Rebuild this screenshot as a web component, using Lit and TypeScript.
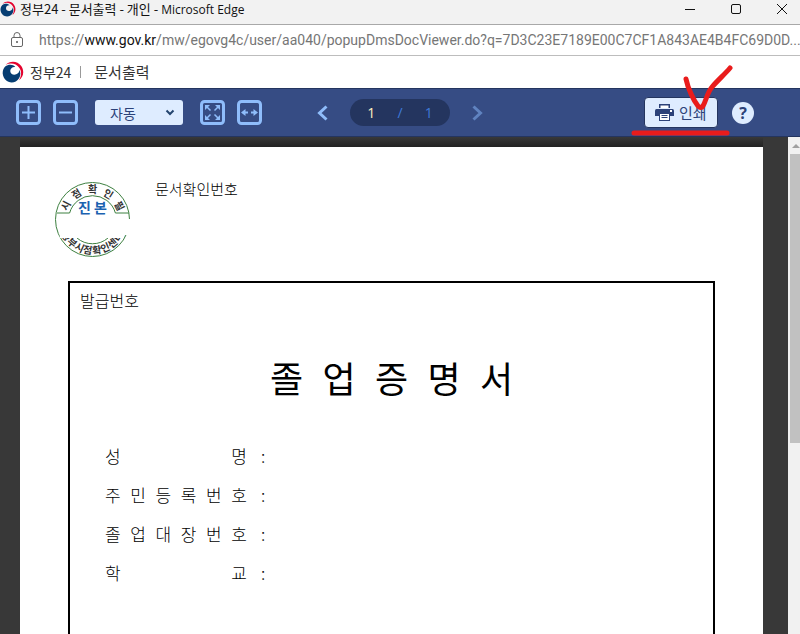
import { LitElement, html, css, svg } from "lit";
import { customElement } from "lit/decorators.js";

const emblem = (size: number) => html`
  <svg class="emblem" width=${size} height=${size} viewBox="0 0 24 24" aria-hidden="true">
    <path d="M4 4C9-.8 17 -.2 21 5.500C25 11.500 23 18 18.500 21C21.500 16 21.500 11 19 7.500C15.500 2.500 9.500 1.500 4 4Z" fill="#e4032e" />
    <path d="M3.500 6C7 3 12.500 3.500 14.500 6.500C11.500 6 9 8 9 10.800C9 14 12.500 15.800 15.500 14.500C18 13.500 19 11.500 18.800 9.500C21.500 14 19.500 20 15 22.300C8.500 25.500 1.500 21 .8 14C.5 10.800 1.700 7.800 3.500 6Z" fill="#063d72" />
  </svg>`;

const around = (chars: string, angles: number[], radius: number, size: number, flip: boolean) =>
  [...chars].map((c, i) => {
    const a = (angles[i] * Math.PI) / 180;
    const x = 38.5 + radius * Math.sin(a);
    const y = 38.5 - radius * Math.cos(a);
    const turn = flip ? angles[i] - 180 : angles[i];
    return svg`<text font-size=${size} text-anchor="middle" y=${size * 0.36}
      transform="translate(${x} ${y}) rotate(${turn})">${c}</text>`;
  });

@customElement("time-seal")
export class TimeSeal extends LitElement {
  static styles = css`
    :host { display: block; }
    svg { display: block; font-family: "Noto Sans CJK KR", sans-serif; font-weight: 700; }
    .ring { fill: none; stroke: #3d8040; }
    .ink { fill: #333; }
    .mark { fill: #1c62b0; }
  `;
  render() {
    return html`<svg width="77" height="77" viewBox="0 0 77 77">
      <circle class="ring" cx="38.5" cy="38.5" r="37" />
      <path class="ring" d="M3 32H15.600A23.800 23.800 0 0 1 61.400 32H75" />
      <path class="ring" d="M23 57A23.800 23.800 0 0 0 54 57" />
      <g class="ink">
        ${around("시점확인필", [-63, -32, 0, 32, 63], 30, 10, false)}
        ${around("정부시점확인센터", [238, 221, 205, 189, 172, 156, 140, 123], 31, 10, true)}
      </g>
      <path d="M4 38H77V54H70V57H6Z" fill="#fff" />
      <text class="mark" x="38.500" y="32" font-size="14" text-anchor="middle">진 본</text>
    </svg>`;
  }
}

@customElement("app-root")
export class AppRoot extends LitElement {
  static styles = css`
    * { box-sizing: border-box; }
    :host {
      display: flex;
      flex-direction: column;
      height: 100vh;
      overflow: hidden;
      background: #fff;
      color: #222;
      font-family: "Noto Sans CJK KR", sans-serif;
    }
    svg { display: block; flex: none; }
    button { border: 0; padding: 0; margin: 0; background: none; font: inherit; color: inherit; display: grid; place-items: center; }
    .titlebar { display: flex; align-items: center; height: 25px; flex: none; background: #f2f2f2; border-bottom: 1px solid #a8a8a8; padding-bottom: 6px; }
    .titlebar h1 { margin: 0 auto 0 4px; font-size: 13px; line-height: 18px; font-weight: 400; color: #111; white-space: nowrap; }
    .titlebar h1 span { font: 12px "Open Sans", sans-serif; }
    .titlebar button { width: 46px; height: 18px; }
    .titlebar button:last-child { width: 41px; padding-left: 5px; }
    .address { display: flex; align-items: center; gap: 15px; height: 31px; flex: none; border-bottom: 1px solid #bdbdbd; padding: 0 12px 0 10px; }
    .address a { flex: 1; min-width: 0; white-space: nowrap; text-decoration: none; color: #767676; font: 14px/20px Roboto, sans-serif; }
    .address b { font-weight: 400; color: #111; }
    .service { display: flex; align-items: center; height: 32px; flex: none; padding-left: 2px; font-size: 14px; line-height: 20px; color: #333; }
    .service a { display: flex; align-items: center; gap: 6px; color: inherit; text-decoration: none; }
    .service h2 { margin: 0 0 0 9px; padding-left: 13px; border-left: 1px solid #999; font-size: 15px; line-height: 12px; font-weight: 400; }
    .toolbar { display: grid; grid-template-columns: 1fr auto 1fr; align-items: center; height: 49px; flex: none; padding: 0 16px; background: #364c84; border: solid #24355f; border-width: 1px 0; }
    .tools, .pager, .actions { display: flex; align-items: center; }
    .tools { gap: 12px; }
    .zoom { position: relative; margin: 0 5px; }
    .zoom select { appearance: none; display: block; width: 88px; height: 25px; border: 0; border-radius: 3px; background: #deecff; color: #2c4279; padding: 0 15px; font: 14px/20px "Noto Sans CJK KR", sans-serif; }
    .zoom svg { position: absolute; right: 8px; top: 8px; pointer-events: none; }
    .pager { gap: 22px; }
    .pages { display: grid; grid-template-columns: 1fr 1fr 1fr; align-items: center; text-align: center; width: 100px; height: 27px; padding: 0 7px; border-radius: 14px; background: #24355f; color: #3f7ad8; font: 14px/20px "Open Sans", sans-serif; }
    .pages input { width: 100%; border: 0; padding: 0; background: none; text-align: center; color: #fff0c0; font: inherit; }
    .actions { justify-content: flex-end; gap: 14px; padding-right: 30px; }
    .print { position: relative; }
    .print button { display: flex; align-items: center; gap: 5px; width: 74px; height: 31px; padding: 0 9px 0 10px; border: 1px solid #24355f; border-radius: 4px; background: #deecff; color: #2c4279; font-size: 15px; white-space: nowrap; }
    .scribble { position: absolute; left: -14px; top: -32px; pointer-events: none; z-index: 2; }
    .help { width: 22px; height: 22px; border-radius: 50%; background: #deecff; color: #2c4279; font: 700 16px/22px "Open Sans", sans-serif; }
    .viewer { display: flex; flex: 1; min-height: 0; background: #383838; }
    .stage { flex: 1; min-width: 0; overflow: hidden; padding: 0 25px 0 20px; }
    .shade { height: 10px; background: linear-gradient(#383838, #222); }
    .paper { display: flex; flex-direction: column; gap: 23px; min-height: 1000px; background: #fff; color: #000; padding: 34px 48px 48px; font-weight: 300; }
    .stamp { display: flex; gap: 24px; margin-left: -14px; }
    .stamp p { margin: 0; font-size: 15px; line-height: 16px; }
    .frame { flex: 1; border: 2px solid #000; padding: 7px 10px; }
    .frame p { margin: 0; font-size: 16px; line-height: 20px; }
    .frame h3 { width: 243px; margin: 42px auto 44px; font-size: 36px; line-height: 50px; font-weight: 400; text-align-last: justify; }
    .fields { margin: 0; padding-left: 25px; display: grid; gap: 19px; }
    .fields div { display: flex; font-size: 17px; line-height: 20px; }
    .fields dt { width: 142px; text-align-last: justify; }
    .fields dd { margin: 0 0 0 14px; }
    .track { width: 12px; flex: none; background: #f1f1f1; padding: 7px 0 0 2px; display: flex; flex-direction: column; gap: 6px; overflow: hidden; }
    .track button { width: 10px; height: 4px; }
    .thumb { height: 59%; background: #c1c1c1; }
  `;

  render() {
    return html`
      <header class="titlebar">
        ${emblem(16)}
        <h1>정부24 - 문서출력 - 개인 - <span>Microsoft Edge</span></h1>
        <button aria-label="최소화"><svg width="10" height="10"><path d="M0 5.500H10" stroke="#111" /></svg></button>
        <button aria-label="최대화"><svg width="10" height="10"><rect x=".5" y=".5" width="9" height="9" rx="1.500" fill="none" stroke="#111" /></svg></button>
        <button aria-label="닫기"><svg width="10" height="10"><path d="M0 0L10 10M10 0L0 10" stroke="#111" /></svg></button>
      </header>
      <div class="address">
        <svg width="14" height="16" viewBox="0 0 14 16"><rect x="1.500" y="5.500" width="11" height="9" rx="1.500" fill="none" stroke="#666" /><path d="M4 5.500V3.500A3 3 0 0 1 10 3.500V5.500" fill="none" stroke="#666" /><circle cx="7" cy="10" r="1" fill="#555" /></svg>
        <a href="#">https://<b>www.gov.kr</b>/mw/egovg4c/user/aa040/popupDmsDocViewer.do?q=7D3C23E7189E00C7CF1A843AE4B4FC69D0D...</a>
      </div>
      <div class="service">
        <a href="#">${emblem(22)}<span>정부24</span></a>
        <h2>문서출력</h2>
      </div>
      <nav class="toolbar">
        <div class="tools">
          <button aria-label="확대"><svg width="25" height="25" fill="none" stroke="#8fbdfb"><rect x="1.500" y="1.500" width="22" height="22" rx="3" stroke-width="3" /><path d="M12.500 6V19M6 12.500H19" stroke-width="2" /></svg></button>
          <button aria-label="축소"><svg width="25" height="25" fill="none" stroke="#8fbdfb"><rect x="1.500" y="1.500" width="22" height="22" rx="3" stroke-width="3" /><path d="M6 12.500H19" stroke-width="2" /></svg></button>
          <div class="zoom">
            <select aria-label="배율"><option>자동</option></select>
            <svg width="10" height="9"><path d="M1.500 2.500L5 6L8.500 2.500" fill="none" stroke="#24456f" stroke-width="2" /></svg>
          </div>
          <button aria-label="화면 맞춤"><svg width="25" height="25" fill="none" stroke="#8fbdfb"><rect x="1.500" y="1.500" width="22" height="22" rx="3" stroke-width="3" /><path d="M6 6L10.500 10.500M19 6L14.500 10.500M6 19L10.500 14.500M19 19L14.500 14.500" stroke-width="1.500" /><path d="M5 5H10L5 10ZM20 5H15L20 10ZM5 20V15L10 20ZM20 20V15L15 20Z" fill="#8fbdfb" stroke="none" /></svg></button>
          <button aria-label="너비 맞춤"><svg width="25" height="25" fill="none" stroke="#8fbdfb"><rect x="1.500" y="1.500" width="22" height="22" rx="3" stroke-width="3" /><path d="M6 12.500H11M14 12.500H19" stroke-width="2" /><path d="M4 12.500L8.500 9V16ZM21 12.500L16.500 9V16Z" fill="#8fbdfb" stroke="none" /></svg></button>
        </div>
        <div class="pager">
          <button aria-label="이전"><svg width="11" height="16"><path d="M9.500 1.500L2.500 8L9.500 14.500" fill="none" stroke="#8fbdfb" stroke-width="3" /></svg></button>
          <div class="pages"><input aria-label="페이지" value="1" /><span>/</span><span>1</span></div>
          <button aria-label="다음"><svg width="11" height="16"><path d="M1.500 1.500L8.500 8L1.500 14.500" fill="none" stroke="#6083c0" stroke-width="3" /></svg></button>
        </div>
        <div class="actions">
          <div class="print">
            <button>
              <svg width="19" height="17" viewBox="0 0 19 17"><path d="M4 0H15V4H4Z" fill="#2c4279" /><path d="M5.500 1.500H13.500V4H5.500Z" fill="#fff" /><path d="M1.500 5H17.500Q19 5 19 6.500V12H0V6.500Q0 5 1.500 5Z" fill="#2c4279" /><path d="M4 9H15V17H4Z" fill="#2c4279" /><path d="M5 10H14V16H5Z" fill="#fff" /><path d="M6.500 11.500H12.500M6.500 13.500H12.500" stroke="#2c4279" /><rect x="15" y="6" width="2" height="2" fill="#fff" /></svg>
              <span>인쇄</span>
            </button>
            <svg class="scribble" width="104" height="72" viewBox="0 0 104 72" fill="none" stroke="#e91c1c" stroke-linecap="round" stroke-linejoin="round"><path d="M56 14C58 24 64 36 68 41Q71 44 73 41C76 36 77 28 82 22C88 15 95 9 100 3" stroke-width="5" /><path d="M4 68H97" stroke-width="5" /></svg>
          </div>
          <button class="help" aria-label="도움말">?</button>
        </div>
      </nav>
      <main class="viewer">
        <div class="stage">
          <div class="shade"></div>
          <article class="paper">
            <div class="stamp"><time-seal></time-seal><p>문서확인번호</p></div>
            <section class="frame">
              <p>발급번호</p>
              <h3>졸 업 증 명 서</h3>
              <dl class="fields">
                ${["성 명", "주 민 등 록 번 호", "졸 업 대 장 번 호", "학 교"].map(
                  (label) => html`<div><dt>${label}</dt><dd>:</dd></div>`
                )}
              </dl>
            </section>
          </article>
        </div>
        <div class="track">
          <button aria-label="위로"><svg width="10" height="4"><path d="M2 4L6 0L10 4Z" fill="#a0a0a0" /></svg></button>
          <div class="thumb"></div>
        </div>
      </main>
    `;
  }
}
